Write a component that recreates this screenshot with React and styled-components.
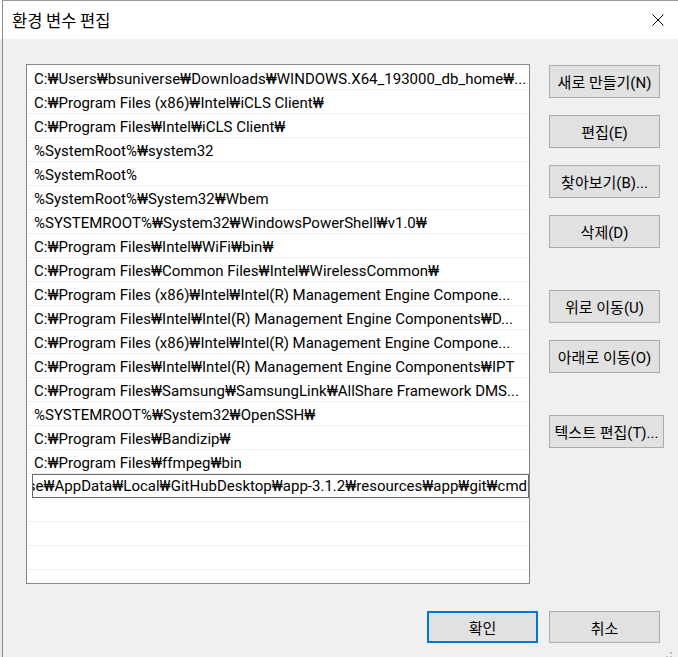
import React from "react";
import styled, { createGlobalStyle } from "styled-components";

const GlobalStyle = createGlobalStyle`
  html, body { margin: 0; padding: 0; }
  body {
    background: #f0f0f0;
    font-family: Roboto, "Noto Sans CJK KR", sans-serif;
    color: #000;
  }
`;

const Screen = styled.div`
  display: flex;
  width: 678px;
  height: 657px;
  overflow: hidden;
`;

const Backdrop = styled.div`
  flex: none;
  width: 2px;
  background: linear-gradient(#ffffff 0 39px, #e6e6e6 39px);
`;

const Window = styled.div`
  position: relative;
  flex: none;
  box-sizing: border-box;
  width: 676px;
  min-width: 0;
  display: flex;
  flex-direction: column;
  border-left: 1px solid #8c8c8c;
  border-top: 1px solid #9b9b9b;
  background: #f0f0f0;
`;

const TitleBar = styled.div`
  flex: none;
  height: 38px;
  display: flex;
  align-items: center;
  justify-content: space-between;
  padding: 0 14px 0 9px;
  background: #ffffff;
`;

const Title = styled.span`
  font-family: "Noto Sans CJK KR", sans-serif;
  font-size: 16.5px;
  line-height: 20px;
`;

const Body = styled.div`
  flex: 1;
  min-width: 0;
  display: flex;
  flex-direction: column;
  padding: 25px 18px 0 23px;
`;

const MainRow = styled.div`
  display: flex;
  gap: 19px;
`;

const List = styled.div`
  flex: none;
  box-sizing: border-box;
  width: 504px;
  height: 520px;
  padding-top: 1px;
  border: 1px solid #828790;
  background: #ffffff;
  overflow: hidden;
`;

const Row = styled.div`
  box-sizing: border-box;
  height: 24px;
  padding: 2px 2px 0 7px;
  border-bottom: 1px solid #f0f0f0;
  font-size: 15px;
  line-height: 23px;
  white-space: nowrap;
  overflow: hidden;
  text-overflow: ellipsis;
`;

const EditRow = styled.div`
  box-sizing: border-box;
  height: 24px;
  margin-left: 5px;
  padding-right: 1px;
  display: flex;
  justify-content: flex-end;
  border: 1px solid #6a6a6a;
  font-size: 15px;
  line-height: 22px;
  white-space: nowrap;
  overflow: hidden;
`;

const EditText = styled.span`
  flex: none;
`;

const ButtonColumn = styled.div`
  display: flex;
  flex-direction: column;
  align-items: flex-start;
  gap: 17px;
  padding-top: 1px;
`;

const Button = styled.button`
  box-sizing: border-box;
  flex: none;
  width: ${(p) => (p.$wide ? "115px" : "111px")};
  height: ${(p) => (p.$short ? "32px" : "33px")};
  margin-top: ${(p) => (p.$spaced ? "25px" : "0")};
  padding: 0;
  border: ${(p) => (p.$primary ? "2px solid #0078d7" : "1px solid #adadad")};
  background: #e1e1e1;
  color: #000;
  font-family: Roboto, "Noto Sans CJK KR", sans-serif;
  font-size: 15px;
  white-space: nowrap;
`;

const Footer = styled.div`
  display: flex;
  justify-content: flex-end;
  gap: 11px;
  margin-top: 27px;
`;

const Grip = styled.svg`
  position: absolute;
  right: 4px;
  bottom: 0;
`;

const CloseIcon = () => (
  <svg width="12" height="12" viewBox="0 0 12 12">
    <path d="M0.5 0.5 L11.5 11.5 M11.5 0.5 L0.5 11.5" stroke="#000" strokeWidth="1" fill="none" />
  </svg>
);

const paths = [
  "C:₩Users₩bsuniverse₩Downloads₩WINDOWS.X64_193000_db_home₩...",
  "C:₩Program Files (x86)₩Intel₩iCLS Client₩",
  "C:₩Program Files₩Intel₩iCLS Client₩",
  "%SystemRoot%₩system32",
  "%SystemRoot%",
  "%SystemRoot%₩System32₩Wbem",
  "%SYSTEMROOT%₩System32₩WindowsPowerShell₩v1.0₩",
  "C:₩Program Files₩Intel₩WiFi₩bin₩",
  "C:₩Program Files₩Common Files₩Intel₩WirelessCommon₩",
  "C:₩Program Files (x86)₩Intel₩Intel(R) Management Engine Compone...",
  "C:₩Program Files₩Intel₩Intel(R) Management Engine Components₩D...",
  "C:₩Program Files (x86)₩Intel₩Intel(R) Management Engine Compone...",
  "C:₩Program Files₩Intel₩Intel(R) Management Engine Components₩IPT",
  "C:₩Program Files₩Samsung₩SamsungLink₩AllShare Framework DMS...",
  "%SYSTEMROOT%₩System32₩OpenSSH₩",
  "C:₩Program Files₩Bandizip₩",
  "C:₩Program Files₩ffmpeg₩bin",
];

const editing =
  "C:₩Users₩bsuniverse₩AppData₩Local₩GitHubDesktop₩app-3.1.2₩resources₩app₩git₩cmd";

export default function App() {
  return (
    <>
      <GlobalStyle />
      <Screen>
        <Backdrop />
        <Window>
          <TitleBar>
            <Title>환경 변수 편집</Title>
            <CloseIcon />
          </TitleBar>
          <Body>
            <MainRow>
              <List>
                {paths.map((p, i) => (
                  <Row key={i}>{p}</Row>
                ))}
                <EditRow>
                  <EditText>{editing}</EditText>
                </EditRow>
                <Row />
                <Row />
                <Row />
                <Row />
              </List>
              <ButtonColumn>
                <Button>새로 만들기(N)</Button>
                <Button>편집(E)</Button>
                <Button>찾아보기(B)...</Button>
                <Button>삭제(D)</Button>
                <Button $spaced>위로 이동(U)</Button>
                <Button>아래로 이동(O)</Button>
                <Button $spaced $wide>텍스트 편집(T)...</Button>
              </ButtonColumn>
            </MainRow>
            <Footer>
              <Button $short $primary>확인</Button>
              <Button $short>취소</Button>
            </Footer>
          </Body>
          <Grip width="8" height="5" viewBox="0 0 8 5">
            <rect x="4" y="0" width="2" height="2" fill="#bcbcbc" />
            <rect x="0" y="4" width="2" height="2" fill="#c4c4c4" />
            <rect x="4" y="4" width="2" height="2" fill="#c4c4c4" />
          </Grip>
        </Window>
      </Screen>
    </>
  );
}
